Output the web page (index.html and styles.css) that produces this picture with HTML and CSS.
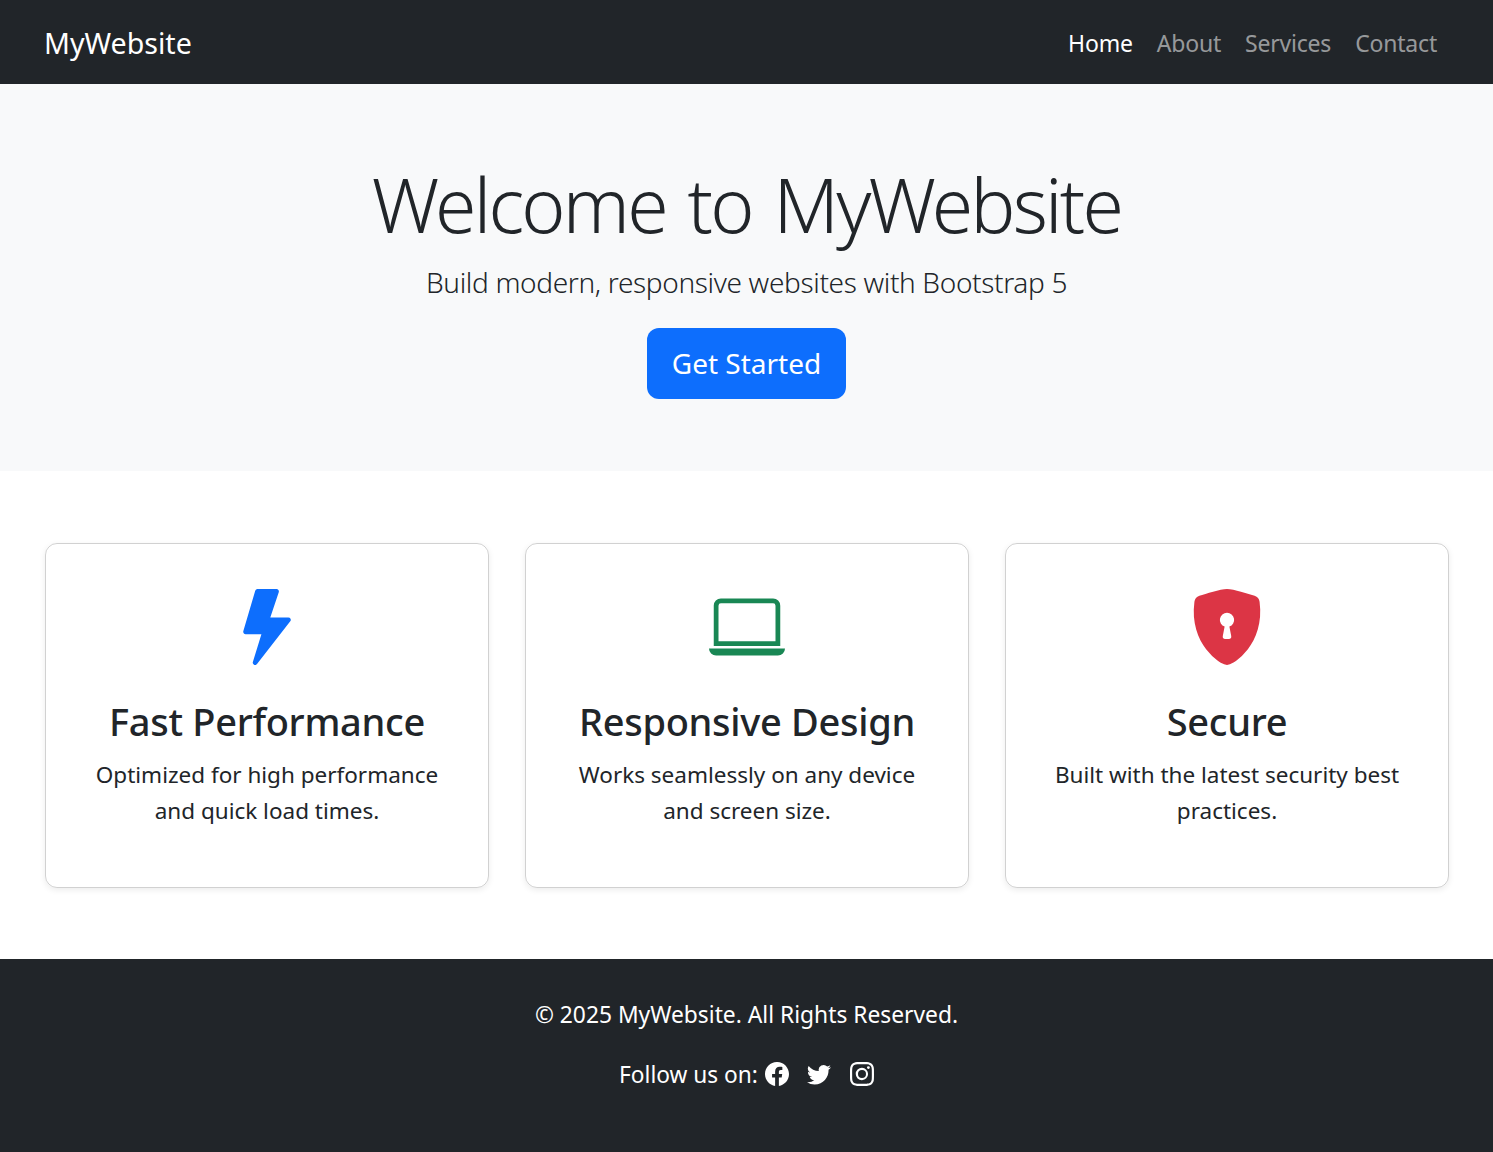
FILE: index.html
```html
<!DOCTYPE html>
<html lang="en">
<head>
<meta charset="utf-8">
<title>MyWebsite</title>
<link rel="stylesheet" href="styles.css">
</head>
<body>
<nav class="navbar">
  <a class="brand" href="#">MyWebsite</a>
  <ul class="nav-links">
    <li><a class="nav-link active" href="#">Home</a></li>
    <li><a class="nav-link" href="#">About</a></li>
    <li><a class="nav-link" href="#">Services</a></li>
    <li><a class="nav-link" href="#">Contact</a></li>
  </ul>
</nav>
<header class="hero">
  <h1 class="hero-title">Welcome to MyWebsite</h1>
  <p class="hero-lead">Build modern, responsive websites with Bootstrap 5</p>
  <a class="btn" href="#">Get Started</a>
</header>
<main class="features">
  <article class="card">
    <svg class="card-icon icon-blue" viewBox="0 0 16 16" fill="currentColor"><path d="M5.52.359A.5.5 0 0 1 6 0h4a.5.5 0 0 1 .474.658L8.694 6H12.5a.5.5 0 0 1 .395.807l-7 9a.5.5 0 0 1-.873-.454L6.823 9.5H3.5a.5.5 0 0 1-.48-.641l2.5-8.5z"/></svg>
    <h3 class="card-title">Fast Performance</h3>
    <p class="card-text">Optimized for high performance and quick load times.</p>
  </article>
  <article class="card">
    <svg class="card-icon icon-green" viewBox="0 0 16 16" fill="currentColor"><path d="M13.5 3a.5.5 0 0 1 .5.5V11H2V3.5a.5.5 0 0 1 .5-.5h11zm-11-1A1.5 1.5 0 0 0 1 3.5V12h14V3.5A1.5 1.5 0 0 0 13.5 2h-11zM0 12.5h16a1.5 1.5 0 0 1-1.5 1.5h-13A1.5 1.5 0 0 1 0 12.5z"/></svg>
    <h3 class="card-title">Responsive Design</h3>
    <p class="card-text">Works seamlessly on any device and screen size.</p>
  </article>
  <article class="card">
    <svg class="card-icon icon-red" viewBox="0 0 16 16" fill="currentColor"><path fill-rule="evenodd" d="M8 0c-.69 0-1.843.265-2.928.56-1.11.3-2.229.655-2.887.87a1.54 1.54 0 0 0-1.044 1.262c-.596 4.477.787 7.795 2.465 9.99a11.777 11.777 0 0 0 2.517 2.453c.386.273.744.482 1.048.625.28.132.581.24.829.24s.548-.108.829-.24a7.159 7.159 0 0 0 1.048-.625 11.775 11.775 0 0 0 2.517-2.453c1.678-2.195 3.061-5.513 2.465-9.99a1.541 1.541 0 0 0-1.044-1.263 62.467 62.467 0 0 0-2.887-.87C9.843.266 8.69 0 8 0zm0 5a1.5 1.5 0 0 1 .5 2.915l.385 1.99a.5.5 0 0 1-.491.595h-.788a.5.5 0 0 1-.49-.595l.384-1.99A1.5 1.5 0 0 1 8 5z"/></svg>
    <h3 class="card-title">Secure</h3>
    <p class="card-text">Built with the latest security best practices.</p>
  </article>
</main>
<footer class="footer">
  <p class="copyright">© 2025 MyWebsite. All Rights Reserved.</p>
  <p class="follow">
    <span>Follow us on:</span>
    <a class="social" href="#"><svg viewBox="0 0 16 16" fill="currentColor"><path d="M16 8.049c0-4.446-3.582-8.05-8-8.05C3.58 0-.002 3.603-.002 8.05c0 4.017 2.926 7.347 6.75 7.951v-5.625h-2.03V8.05H6.75V6.275c0-2.017 1.195-3.131 3.022-3.131.876 0 1.791.157 1.791.157v1.98h-1.009c-.993 0-1.303.621-1.303 1.258v1.51h2.218l-.354 2.326H9.25V16c3.824-.604 6.75-3.934 6.75-7.951z"/></svg></a>
    <a class="social" href="#"><svg viewBox="0 0 16 16" fill="currentColor"><path d="M5.026 15c6.038 0 9.341-5.003 9.341-9.334 0-.14 0-.282-.006-.422A6.685 6.685 0 0 0 16 3.542a6.658 6.658 0 0 1-1.889.518 3.301 3.301 0 0 0 1.447-1.817 6.533 6.533 0 0 1-2.087.793A3.286 3.286 0 0 0 7.875 6.03a9.325 9.325 0 0 1-6.767-3.429 3.289 3.289 0 0 0 1.018 4.382A3.323 3.323 0 0 1 .64 6.575v.045a3.288 3.288 0 0 0 2.632 3.218 3.203 3.203 0 0 1-.865.115 3.23 3.23 0 0 1-.614-.057 3.283 3.283 0 0 0 3.067 2.277A6.588 6.588 0 0 1 .78 13.58a6.32 6.32 0 0 1-.78-.045A9.344 9.344 0 0 0 5.026 15z"/></svg></a>
    <a class="social" href="#"><svg viewBox="0 0 16 16" fill="currentColor"><path d="M8 0C5.829 0 5.556.01 4.703.048 3.85.088 3.269.222 2.76.42a3.917 3.917 0 0 0-1.417.923A3.927 3.927 0 0 0 .42 2.76C.222 3.268.087 3.85.048 4.7.01 5.555 0 5.827 0 8.001c0 2.172.01 2.444.048 3.297.04.852.174 1.433.372 1.942.205.526.478.972.923 1.417.444.445.89.719 1.416.923.51.198 1.09.333 1.942.372C5.555 15.99 5.827 16 8 16s2.444-.01 3.298-.048c.851-.04 1.434-.174 1.943-.372a3.916 3.916 0 0 0 1.416-.923c.445-.445.718-.891.923-1.417.197-.509.332-1.09.372-1.942C15.99 10.445 16 10.173 16 8s-.01-2.445-.048-3.299c-.04-.851-.175-1.433-.372-1.941a3.926 3.926 0 0 0-.923-1.417A3.911 3.911 0 0 0 13.24.42c-.51-.198-1.092-.333-1.943-.372C10.443.01 10.172 0 7.998 0h.003zm-.717 1.442h.718c2.136 0 2.389.007 3.232.046.78.035 1.204.166 1.486.275.373.145.64.319.92.599.28.28.453.546.598.92.11.281.24.705.275 1.485.039.843.047 1.096.047 3.231s-.008 2.389-.047 3.232c-.035.78-.166 1.203-.275 1.485a2.47 2.47 0 0 1-.599.919c-.28.28-.546.453-.92.598-.28.11-.704.24-1.485.276-.843.038-1.096.047-3.232.047s-2.39-.009-3.233-.047c-.78-.036-1.203-.166-1.485-.276a2.478 2.478 0 0 1-.92-.598 2.48 2.48 0 0 1-.6-.92c-.109-.281-.24-.705-.275-1.485-.038-.843-.046-1.096-.046-3.233 0-2.136.008-2.388.046-3.231.036-.78.166-1.204.276-1.486.145-.373.319-.64.599-.92.28-.28.546-.453.92-.598.282-.11.705-.24 1.485-.276.738-.034 1.024-.044 2.515-.045v.002zm4.988 1.328a.96.96 0 1 0 0 1.92.96.96 0 0 0 0-1.92zm-4.27 1.122a4.109 4.109 0 1 0 0 8.217 4.109 4.109 0 0 0 0-8.217zm0 1.441a2.667 2.667 0 1 1 0 5.334 2.667 2.667 0 0 1 0-5.334z"/></svg></a>
  </p>
</footer>
</body>
</html>
```
FILE: styles.css
```css
* { box-sizing: border-box; }
html, body { margin: 0; }
body {
  font-family: "Noto Sans", "Open Sans", sans-serif;
  font-size: 22.5px;
  line-height: 36px;
  color: #212529;
  background: #fff;
}
a { text-decoration: none; color: inherit; }
p, h1, h3, ul { margin: 0; padding: 0; }

.navbar {
  height: 84px;
  padding: 0 56px 0 44px;
  background: #212529;
  display: flex;
  align-items: center;
  justify-content: space-between;
}
.brand { color: #fff; font-size: 28.6px; line-height: 45px; }
.nav-links { display: flex; gap: 24px; list-style: none; font-size: 23px; letter-spacing: -.2px; padding-top: 2px; }
.nav-link { color: rgba(255, 255, 255, .55); }
.nav-link.active { color: #fff; }

.hero {
  height: 387px;
  padding-top: 70px;
  background: #f8f9fa;
  display: flex;
  flex-direction: column;
  align-items: center;
  text-align: center;
}
.hero-title { font-size: 75px; line-height: 101px; font-weight: 300; letter-spacing: -2.75px; word-spacing: 5px; margin-bottom: 5px; }
.hero-lead { font-size: 28px; line-height: 45px; font-weight: 300; letter-spacing: -.34px; margin-bottom: 23px; }
.btn {
  width: 199px;
  height: 71px;
  border-radius: 12px;
  background: #0d6efd;
  color: #fff;
  font-size: 28px;
  line-height: 71px;
}

.features {
  padding: 72px 44px 71px 45px;
  display: grid;
  grid-template-columns: repeat(3, 1fr);
  gap: 36px;
}
.card {
  height: 345px;
  padding: 45px 36px 0;
  border: 1px solid rgba(0, 0, 0, .18);
  border-radius: 12px;
  box-shadow: 0 2px 6px rgba(0, 0, 0, .08);
  display: flex;
  flex-direction: column;
  align-items: center;
  text-align: center;
}
.card-icon { width: 76px; height: 76px; flex: none; }
.icon-blue { color: #0d6efd; }
.icon-green { color: #198754; }
.icon-red { color: #dc3545; }
.card-title { font-size: 38px; line-height: 50px; font-weight: 500; letter-spacing: -.3px; margin-top: 31px; margin-bottom: 11px; }

.footer {
  height: 193px;
  padding-top: 38px;
  background: #212529;
  color: #fff;
  text-align: center;
}
.copyright { font-size: 22.8px; margin-bottom: 22px; }
.follow { font-size: 22.7px; display: flex; justify-content: center; align-items: center; gap: 18.5px; }
.follow span { margin-right: -11.5px; padding-top: 2px; }
.social { display: flex; width: 24px; height: 24px; }
.social svg { width: 24px; height: 24px; }
```
